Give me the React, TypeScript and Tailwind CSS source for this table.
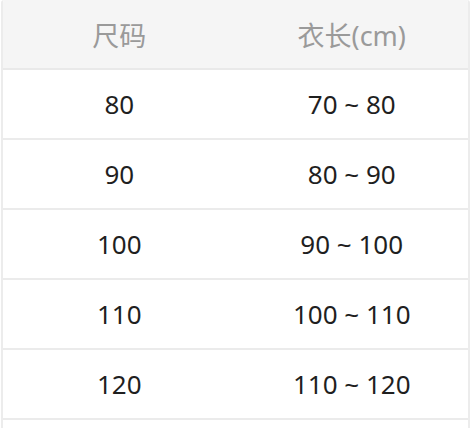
import React from 'react';

const rows = [
  { size: '80', length: '70 ~ 80' },
  { size: '90', length: '80 ~ 90' },
  { size: '100', length: '90 ~ 100' },
  { size: '110', length: '100 ~ 110' },
  { size: '120', length: '110 ~ 120' },
];

export default function App() {
  return (
    <div
      className="w-[472px] h-[428px] overflow-hidden bg-white"
      style={{ fontFamily: '"Noto Sans", "Noto Sans CJK SC", sans-serif' }}
    >
      <div className="mx-px w-[469px] border-x-2 border-[#ececec] rounded-t-[3px] overflow-hidden">
        {/* header */}
        <div className="grid grid-cols-2 h-[70px] bg-[#f5f5f5] border-b-2 border-[#e9e9e9] text-[27px] text-[#9a9a9a]">
          <div className="flex items-center justify-center pt-1">尺码</div>
          <div className="flex items-center justify-center pt-1">衣长(cm)</div>
        </div>
        {rows.map((r) => (
          <div
            key={r.size}
            className="grid grid-cols-2 h-[70px] border-b-2 border-[#ebebeb] text-[26px] text-[#1f1f1f]"
          >
            <div className="flex items-center justify-center">{r.size}</div>
            <div className="flex items-center justify-center">{r.length}</div>
          </div>
        ))}
        {/* next row, cut off by the window */}
        <div className="h-[70px]" />
      </div>
    </div>
  );
}
